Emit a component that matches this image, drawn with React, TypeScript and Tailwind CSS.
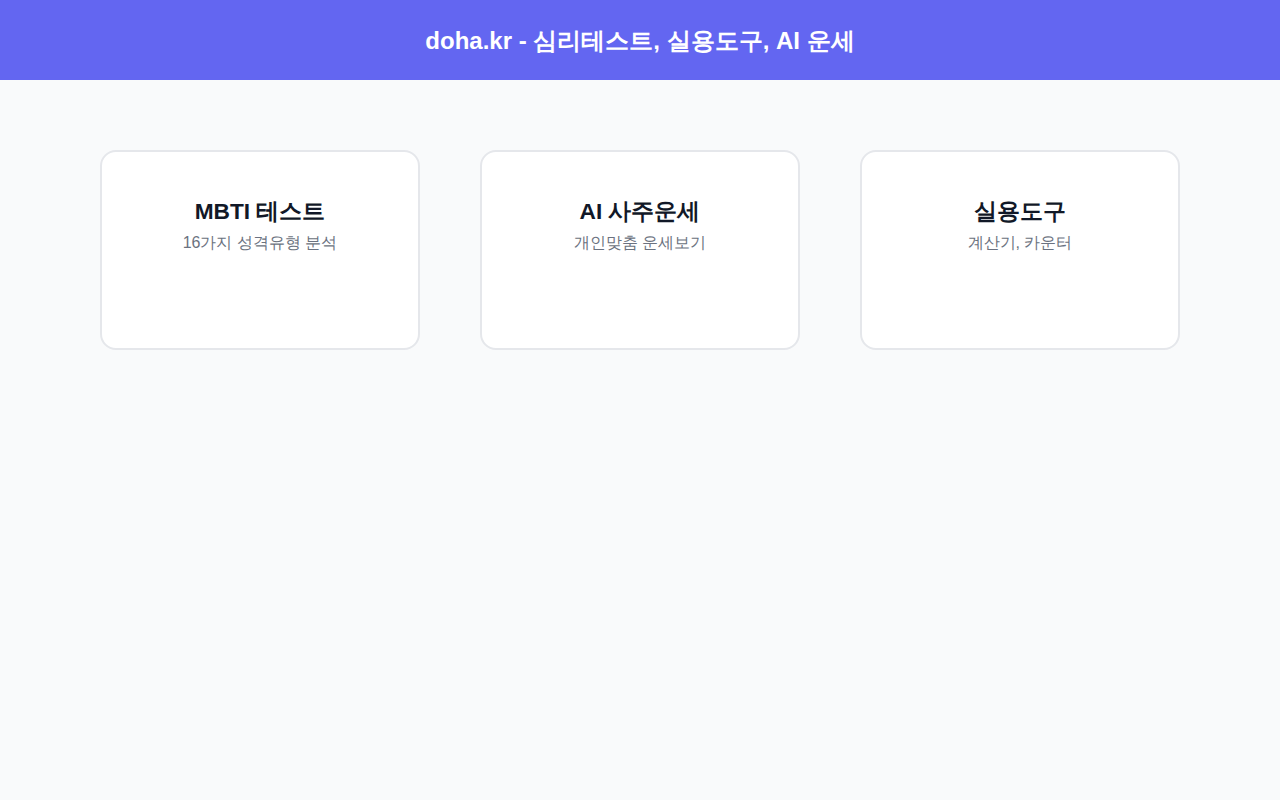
const cards = [
  { title: "MBTI 테스트", desc: "16가지 성격유형 분석" },
  { title: "AI 사주운세", desc: "개인맞춤 운세보기" },
  { title: "실용도구", desc: "계산기, 카운터" },
];

export default function App() {
  return (
    <div className="min-h-screen bg-[#f9fafb] font-[Arial,sans-serif]">
      <header className="h-20 bg-[#6366f1] flex items-center justify-center pt-[2px]">
        <h1 className="text-white text-[24px] font-bold leading-none">
          doha.kr - 심리테스트, 실용도구, AI 운세
        </h1>
      </header>

      <main className="w-[1080px] mx-auto pt-[70px] grid grid-cols-3 gap-[60px]">
        {cards.map((c) => (
          <div
            key={c.title}
            className="h-[200px] bg-white border-2 border-[#e5e7eb] rounded-2xl pt-[41px] text-center"
          >
            <h2 className="text-[22.7px] leading-[36px] font-bold text-[#111827]">{c.title}</h2>
            <p className="mt-[2px] text-[16px] leading-[24px] text-[#6b7280]">{c.desc}</p>
          </div>
        ))}
      </main>
    </div>
  );
}
